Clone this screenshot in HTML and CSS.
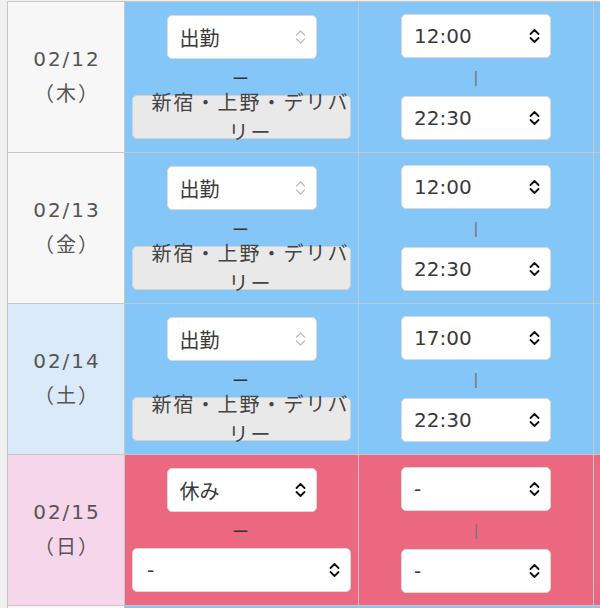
FILE: index.html
```html
<!DOCTYPE html>
<html lang="ja">
<head>
<meta charset="utf-8">
<title>シフト</title>
<link rel="stylesheet" href="styles.css">
</head>
<body>
<div class="sheet">
  <div class="row work">
    <div class="date">02/12<br>（木）</div>
    <div class="cell kind">
      <div class="sel"><span>出勤</span><svg class="chev dim" viewBox="0 0 11 16"><path d="M1.5 6 L5.5 2 L9.5 6 M1.5 10 L5.5 14 L9.5 10"/></svg></div>
      <div class="sep dash">ー</div>
      <div class="box"><span>新宿・上野・デリバリー</span></div>
    </div>
    <div class="cell time">
      <div class="sel"><span>12:00</span><svg class="chev" viewBox="0 0 11 16"><path d="M1.5 6 L5.5 2 L9.5 6 M1.5 10 L5.5 14 L9.5 10"/></svg></div>
      <div class="sep bar">|</div>
      <div class="sel"><span>22:30</span><svg class="chev" viewBox="0 0 11 16"><path d="M1.5 6 L5.5 2 L9.5 6 M1.5 10 L5.5 14 L9.5 10"/></svg></div>
    </div>
    <div class="cell extra"></div>
  </div>

  <div class="row work">
    <div class="date">02/13<br>（金）</div>
    <div class="cell kind">
      <div class="sel"><span>出勤</span><svg class="chev dim" viewBox="0 0 11 16"><path d="M1.5 6 L5.5 2 L9.5 6 M1.5 10 L5.5 14 L9.5 10"/></svg></div>
      <div class="sep dash">ー</div>
      <div class="box"><span>新宿・上野・デリバリー</span></div>
    </div>
    <div class="cell time">
      <div class="sel"><span>12:00</span><svg class="chev" viewBox="0 0 11 16"><path d="M1.5 6 L5.5 2 L9.5 6 M1.5 10 L5.5 14 L9.5 10"/></svg></div>
      <div class="sep bar">|</div>
      <div class="sel"><span>22:30</span><svg class="chev" viewBox="0 0 11 16"><path d="M1.5 6 L5.5 2 L9.5 6 M1.5 10 L5.5 14 L9.5 10"/></svg></div>
    </div>
    <div class="cell extra"></div>
  </div>

  <div class="row work sat">
    <div class="date">02/14<br>（土）</div>
    <div class="cell kind">
      <div class="sel"><span>出勤</span><svg class="chev dim" viewBox="0 0 11 16"><path d="M1.5 6 L5.5 2 L9.5 6 M1.5 10 L5.5 14 L9.5 10"/></svg></div>
      <div class="sep dash">ー</div>
      <div class="box"><span>新宿・上野・デリバリー</span></div>
    </div>
    <div class="cell time">
      <div class="sel"><span>17:00</span><svg class="chev" viewBox="0 0 11 16"><path d="M1.5 6 L5.5 2 L9.5 6 M1.5 10 L5.5 14 L9.5 10"/></svg></div>
      <div class="sep bar">|</div>
      <div class="sel"><span>22:30</span><svg class="chev" viewBox="0 0 11 16"><path d="M1.5 6 L5.5 2 L9.5 6 M1.5 10 L5.5 14 L9.5 10"/></svg></div>
    </div>
    <div class="cell extra"></div>
  </div>

  <div class="row off sun">
    <div class="date">02/15<br>（日）</div>
    <div class="cell kind">
      <div class="sel"><span>休み</span><svg class="chev" viewBox="0 0 11 16"><path d="M1.5 6 L5.5 2 L9.5 6 M1.5 10 L5.5 14 L9.5 10"/></svg></div>
      <div class="sep dash">ー</div>
      <div class="sel wide"><span>-</span><svg class="chev" viewBox="0 0 11 16"><path d="M1.5 6 L5.5 2 L9.5 6 M1.5 10 L5.5 14 L9.5 10"/></svg></div>
    </div>
    <div class="cell time">
      <div class="sel"><span>-</span><svg class="chev" viewBox="0 0 11 16"><path d="M1.5 6 L5.5 2 L9.5 6 M1.5 10 L5.5 14 L9.5 10"/></svg></div>
      <div class="sep bar">|</div>
      <div class="sel"><span>-</span><svg class="chev" viewBox="0 0 11 16"><path d="M1.5 6 L5.5 2 L9.5 6 M1.5 10 L5.5 14 L9.5 10"/></svg></div>
    </div>
    <div class="cell extra"></div>
  </div>

  <div class="row work">
    <div class="date"></div>
    <div class="cell kind"></div>
    <div class="cell time"></div>
    <div class="cell extra"></div>
  </div>
</div>
</body>
</html>
```

FILE: styles.css
```css
html, body {
  margin: 0;
  padding: 0;
}
body {
  width: 600px;
  height: 608px;
  overflow: hidden;
  background: #f0f0f0;
  font-family: "DejaVu Sans", "Noto Sans CJK JP", sans-serif;
  color: #333;
}
.sheet {
  display: grid;
  grid-template-columns: 116px 233px 234px 120px;
  grid-auto-rows: 150px;
  gap: 1px;
  padding: 1px;
  margin: 1px 0 0 7px;
  width: max-content;
  background: #c6c6c6;
}
.row {
  display: contents;
}
.date {
  display: flex;
  align-items: center;
  justify-content: center;
  text-align: center;
  background: #f7f7f7;
  font-size: 20px;
  line-height: 35px;
  letter-spacing: 2px;
  color: #555;
  padding-left: 2px;
}
.sat .date {
  background: #dbeaf8;
}
.sun .date {
  background: #f6d6ea;
}
.cell {
  display: flex;
  flex-direction: column;
  align-items: center;
  justify-content: center;
}
.work .cell {
  background: #84c6f8;
}
.off .cell {
  background: #ec6780;
}
.sel {
  box-sizing: border-box;
  width: 150px;
  height: 44px;
  flex: none;
  display: flex;
  align-items: center;
  padding: 0 10px 0 12px;
  background: #fff;
  border: 1px solid #dadada;
  border-radius: 5px;
  font-size: 20px;
  color: #3a3a3a;
}
.sel.wide {
  width: 219px;
  padding-left: 14px;
}
.chev {
  margin-left: auto;
  width: 11px;
  height: 16px;
  flex: none;
  fill: none;
  stroke: #111;
  stroke-width: 1.8;
  stroke-linecap: round;
  stroke-linejoin: round;
}
.chev.dim {
  stroke: #bdbdbd;
  stroke-width: 1.3;
}
.sep {
  height: 36px;
  flex: none;
  display: flex;
  align-items: center;
  justify-content: center;
}
.dash {
  font-family: "Noto Sans CJK JP", sans-serif;
  font-size: 17px;
  color: #333;
  padding-right: 2px;
}
.bar {
  font-family: "Liberation Sans", sans-serif;
  font-size: 17px;
  color: #777;
  padding-top: 2px;
}
.box {
  box-sizing: border-box;
  width: 219px;
  height: 44px;
  flex: none;
  display: flex;
  align-items: center;
  justify-content: center;
  padding-left: 18px;
  background: #e9e9e9;
  border: 1px solid #d2d2d2;
  border-radius: 5px;
  font-family: "Noto Sans CJK JP", sans-serif;
  font-size: 20px;
  letter-spacing: 2px;
  line-height: 30px;
  color: #444;
}
.box span {
  text-align: center;
}
```
